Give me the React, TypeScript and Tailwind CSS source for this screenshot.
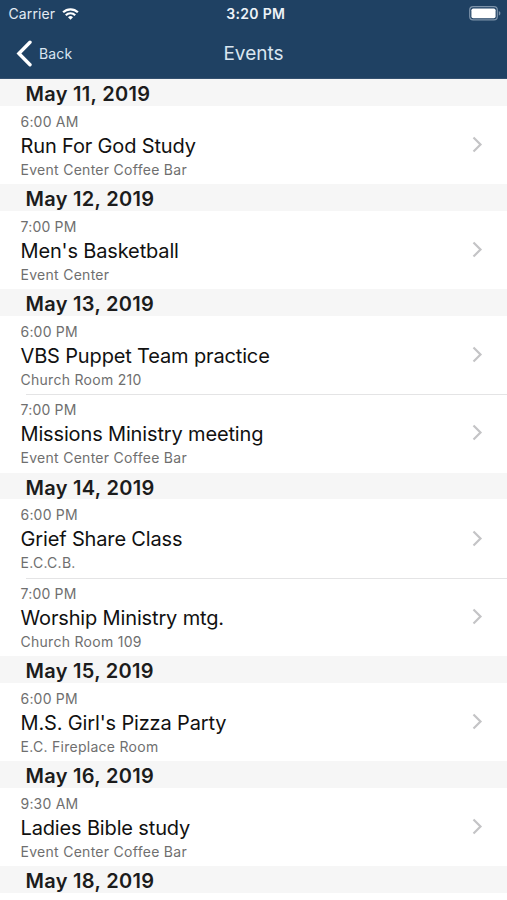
interface EventItem {
  time: string
  title: string
  place: string
}

interface DayGroup {
  date: string
  events: EventItem[]
}

const days: DayGroup[] = [
  {
    date: 'May 11, 2019',
    events: [{ time: '6:00 AM', title: 'Run For God Study', place: 'Event Center Coffee Bar' }]
  },
  {
    date: 'May 12, 2019',
    events: [{ time: '7:00 PM', title: "Men's Basketball", place: 'Event Center' }]
  },
  {
    date: 'May 13, 2019',
    events: [
      { time: '6:00 PM', title: 'VBS Puppet Team practice', place: 'Church Room 210' },
      { time: '7:00 PM', title: 'Missions Ministry meeting', place: 'Event Center Coffee Bar' }
    ]
  },
  {
    date: 'May 14, 2019',
    events: [
      { time: '6:00 PM', title: 'Grief Share Class', place: 'E.C.C.B.' },
      { time: '7:00 PM', title: 'Worship Ministry mtg.', place: 'Church Room 109' }
    ]
  },
  {
    date: 'May 15, 2019',
    events: [{ time: '6:00 PM', title: "M.S. Girl's Pizza Party", place: 'E.C. Fireplace Room' }]
  },
  {
    date: 'May 16, 2019',
    events: [{ time: '9:30 AM', title: 'Ladies Bible study', place: 'Event Center Coffee Bar' }]
  },
  { date: 'May 18, 2019', events: [] }
]

function WifiIcon() {
  return (
    <svg width="17" height="12" viewBox="0 0 18 13" fill="none" stroke="#fff" strokeWidth="2.4">
      <path d="M1 4.7a11.3 11.3 0 0 1 16 0" />
      <path d="M3.9 7.8a7.2 7.2 0 0 1 10.2 0" />
      <path d="M9 12.7 6.3 10a3.8 3.8 0 0 1 5.4 0Z" fill="#fff" stroke="none" />
    </svg>
  )
}

function BatteryIcon() {
  return (
    <svg width="32" height="15" viewBox="0 0 32 15" fill="none">
      <rect x="0.7" y="0.7" width="27.6" height="13.2" rx="3.4" stroke="#7d93aa" strokeWidth="1.2" />
      <rect x="2.4" y="2.4" width="24.2" height="9.8" rx="1.8" fill="#fff" />
      <path d="M29.8 5v4.6c1-.4 1.6-1.3 1.6-2.3s-.6-1.9-1.6-2.3Z" fill="#7d93aa" />
    </svg>
  )
}

function StatusBar() {
  return (
    <div className="grid h-[27px] grid-cols-3 items-center pl-[8.5px] pr-[6px]">
      <div className="flex items-center gap-[7px]">
        <span className="text-[14px] tracking-[0.1px] text-[#e3ebf3]">Carrier</span>
        <WifiIcon />
      </div>
      <span className="pl-[2px] text-center text-[14px] font-semibold tracking-[0.3px] text-[#edf3f8]">
        3:20 PM
      </span>
      <div className="flex justify-end">
        <BatteryIcon />
      </div>
    </div>
  )
}

function NavBar() {
  return (
    <div className="grid h-[53px] grid-cols-3 items-center pl-4 pr-4">
      <button type="button" className="flex items-center gap-[7px]">
        <svg width="16" height="27" viewBox="0 0 16 27" fill="none" stroke="#fff" strokeWidth="3.4">
          <path d="M14 2.2 2.9 13.5 14 24.8" strokeLinecap="round" />
        </svg>
        <span className="text-[14px] tracking-[0.15px] text-[#d9e5f0]">Back</span>
      </button>
      <h1 className="pt-[2px] text-center text-[19px] text-[#d9e5f0]">Events</h1>
    </div>
  )
}

function EventRow({ item, divider }: { item: EventItem; divider: boolean }) {
  return (
    <li>
      {divider && <div className="-mb-px ml-[26px] h-px bg-[#e4e4e5]" />}
      <div className="flex h-[78.3px] items-center justify-between pl-[20.5px] pr-[24px]">
        <div className="pt-[1.4px] whitespace-nowrap">
          <p className="text-[14px] leading-[22px] tracking-[0.2px] text-[#6f6f6f]">{item.time}</p>
          <p className="text-[20px] leading-[26px] tracking-[-0.15px] text-[#111]">{item.title}</p>
          <p className="text-[14px] leading-[22px] tracking-[0.28px] text-[#6f6f6f]">{item.place}</p>
        </div>
        <svg className="mb-px" width="11" height="17" viewBox="0 0 11 17" fill="none" stroke="#c4c4c6" strokeWidth="2.2">
          <path d="M1.5 1.5 8.5 8.5 1.5 15.5" />
        </svg>
      </div>
    </li>
  )
}

export default function App() {
  return (
    <div className="h-[900px] w-[507px] overflow-hidden bg-white font-['Inter',sans-serif]">
      <header className="h-[79px] border-b border-[#34506f] bg-[#1f4163]">
        <StatusBar />
        <NavBar />
      </header>
      <main>
        {days.map(day => (
          <section key={day.date}>
            <h2 className="h-[26.8px] bg-[#f6f6f6] pl-[25.5px] text-[20px] leading-[30px] font-semibold tracking-[0.3px] text-[#1c1c1c]">
              {day.date}
            </h2>
            <ul>
              {day.events.map((item, i) => (
                <EventRow key={item.title} item={item} divider={i > 0} />
              ))}
            </ul>
          </section>
        ))}
      </main>
    </div>
  )
}
